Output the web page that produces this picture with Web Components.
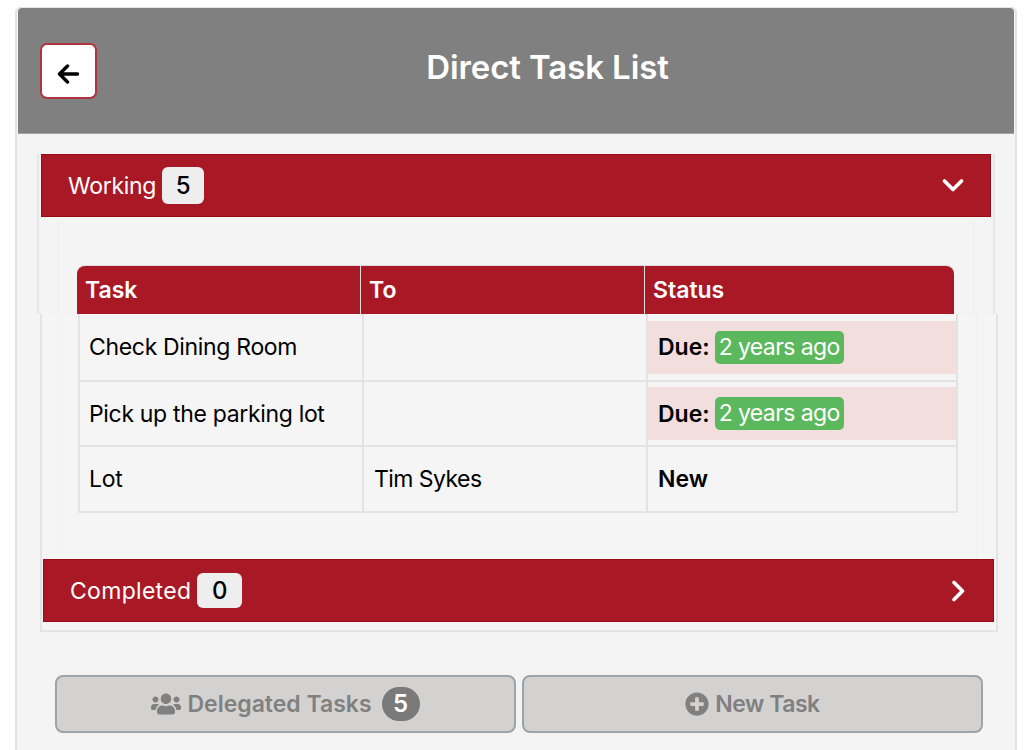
<!DOCTYPE html>
<html lang="en">
<head>
<meta charset="utf-8">
<title>Direct Task List</title>
<style>
    html, body { margin: 0; height: 750px; overflow: hidden; background: #fff; }
    body { font-family: "Inter", "Liberation Sans", sans-serif; color: #000; }
</style>
</head>
<body>

<task-screen>
    <task-topbar heading="Direct Task List"></task-topbar>

    <task-panel-top>
        <section-head label="Working" count="5" open style="--track: -0.3px"></section-head>
        <table-head></table-head>
    </task-panel-top>

    <task-panel-bottom>
        <task-row task="Check Dining Room"><status-due></status-due></task-row>
        <task-row task="Pick up the parking lot"><status-due></status-due></task-row>
        <task-row task="Lot" to="Tim Sykes"><b>New</b></task-row>
        <section-head slot="after" label="Completed" count="0" style="--track: 0.3px; --badge-h: 35px; --badge-w: 45px"></section-head>
    </task-panel-bottom>

    <action-bar>
        <action-button label="Delegated Tasks" count="5" icon="users"></action-button>
        <action-button label="New Task" icon="plus" style="--track: -0.5px"></action-button>
    </action-bar>
</task-screen>

<script>
// SHARED ICON MARKUP
const ICONS = {
    users: `<svg width="30" height="24" viewBox="0 0 640 512" fill="currentColor"><path d="M96 224c35.3 0 64-28.7 64-64s-28.7-64-64-64-64 28.7-64 64 28.7 64 64 64zm448 0c35.3 0 64-28.7 64-64s-28.7-64-64-64-64 28.7-64 64 28.7 64 64 64zm32 32h-64c-17.6 0-33.5 7.1-45.1 18.6 40.3 22.1 68.9 62 75.1 109.4h66c17.7 0 32-14.3 32-32v-32c0-35.3-28.7-64-64-64zm-256 0c61.9 0 112-50.1 112-112S381.9 32 320 32 208 82.1 208 144s50.1 112 112 112zm76.8 32h-8.3c-20.8 10-43.9 16-68.5 16s-47.6-6-68.5-16h-8.3C179.6 288 128 339.6 128 403.2V432c0 26.5 21.5 48 48 48h288c26.5 0 48-21.5 48-48v-28.8c0-63.6-51.6-115.2-115.2-115.2zm-223.7-13.4C161.5 263.1 145.6 256 128 256H64c-35.3 0-64 28.7-64 64v32c0 17.7 14.3 32 32 32h65.9c6.3-47.4 34.9-87.3 75.2-109.4z"/></svg>`,
    plus: `<svg width="24" height="24" viewBox="0 0 512 512" fill="currentColor"><path d="M256 8C119 8 8 119 8 256s111 248 248 248 248-111 248-248S393 8 256 8zm144 276c0 6.6-5.4 12-12 12h-92v92c0 6.6-5.4 12-12 12h-56c-6.6 0-12-5.4-12-12v-92h-92c-6.6 0-12-5.4-12-12v-56c0-6.6 5.4-12 12-12h92v-92c0-6.6 5.4-12 12-12h56c6.6 0 12 5.4 12 12v92h92c6.6 0 12 5.4 12 12v56z"/></svg>`,
    down: `<svg width="22" height="15" viewBox="0 0 22 15" fill="none" stroke="#fff" stroke-width="3.6" stroke-linecap="round" stroke-linejoin="round"><path d="M2.5 3l8.5 8.5L19.5 3"/></svg>`,
    right: `<svg width="15" height="22" viewBox="0 0 15 22" fill="none" stroke="#fff" stroke-width="3.6" stroke-linecap="round" stroke-linejoin="round"><path d="M3 2.5l8.5 8.5L3 19.5"/></svg>`
};

// OUTER CARD
class TaskScreen extends HTMLElement {
    constructor() {
        super();
        this.attachShadow({ mode: 'open' });
        this.shadowRoot.innerHTML = `
            <style>
                :host {
                    display: block;
                    box-sizing: border-box;
                    width: 1002px;
                    height: 743px;
                    margin: 7px 0 0 15px;
                    background: #f4f4f4;
                    border: 2px solid #e2e2e2;
                    border-width: 1px 2px 0;
                    border-radius: 5px 5px 0 0;
                }
            </style>
            <slot></slot>
        `;
    }
}

// GREY TITLE BAR WITH BACK BUTTON
class TaskTopbar extends HTMLElement {
    constructor() {
        super();
        this.attachShadow({ mode: 'open' });
        this.shadowRoot.innerHTML = `
            <style>
                :host {
                    display: flex;
                    align-items: center;
                    box-sizing: border-box;
                    height: 126px;
                    margin: 0 1px;
                    padding: 0 16px 0 22px;
                    background: #808080;
                    border-bottom: 1px solid #a3a3a3;
                    border-radius: 4px 4px 0 0;
                }
                button {
                    box-sizing: border-box;
                    width: 57px;
                    height: 56px;
                    padding: 6px 2px 0 0;
                    display: flex;
                    align-items: center;
                    justify-content: center;
                    background: #fff;
                    border: 2px solid #b0343e;
                    border-radius: 7px;
                }
                h1 {
                    flex: 1;
                    margin: 0 0 7px;
                    text-align: center;
                    color: #fff;
                    font-size: 33px;
                    font-weight: 600;
                    letter-spacing: -0.1px;
                }
            </style>
            <button aria-label="Back">
                <svg width="22" height="20" viewBox="0 0 22 20" fill="none" stroke="#000" stroke-width="3.4" stroke-linecap="round" stroke-linejoin="round"><path d="M10.5 2L2.5 10l8 8M3 10h17.5"/></svg>
            </button>
            <h1></h1>
        `;
        this.shadowRoot.querySelector('h1').textContent = this.getAttribute('heading');
    }
}

// RED ACCORDION HEADER
class SectionHead extends HTMLElement {
    constructor() {
        super();
        this.attachShadow({ mode: 'open' });
        this.shadowRoot.innerHTML = `
            <style>
                :host {
                    display: flex;
                    align-items: center;
                    box-sizing: border-box;
                    height: 63px;
                    padding: 0 27px 0 26px;
                    background: #a91825;
                    border: 1px solid #9a0a16;
                    color: #fff;
                    font-size: 23px;
                }
                .label { padding-top: 1px; letter-spacing: var(--track, 0); }
                .count {
                    box-sizing: border-box;
                    width: var(--badge-w, 42px);
                    height: var(--badge-h, 37px);
                    margin-left: 6px;
                    line-height: var(--badge-h, 37px);
                    text-align: center;
                    background: #eee;
                    border-radius: 6px;
                    color: #000;
                    font-size: 24px;
                    font-weight: 500;
                }
                .icon { margin-left: auto; display: flex; }
            </style>
            <span class="label"></span><span class="count"></span><span class="icon"></span>
        `;
        this.shadowRoot.querySelector('.label').textContent = this.getAttribute('label');
        this.shadowRoot.querySelector('.count').textContent = this.getAttribute('count');
        const icon = this.shadowRoot.querySelector('.icon');
        icon.innerHTML = this.hasAttribute('open') ? ICONS.down : ICONS.right;
        icon.style.marginRight = this.hasAttribute('open') ? '-1px' : '0';
    }
}

// UPPER PART OF THE PANEL: HEADER, THEN TABLE HEAD
class TaskPanelTop extends HTMLElement {
    constructor() {
        super();
        this.attachShadow({ mode: 'open' });
        this.shadowRoot.innerHTML = `
            <style>
                :host {
                    display: block;
                    box-sizing: border-box;
                    width: 958px;
                    margin: 20px 0 0 20px;
                    padding: 0 2px;
                    border: 2px solid #e6e6e6;
                    border-width: 0 2px;
                }
                .body {
                    box-sizing: border-box;
                    width: 916px;
                    margin-left: 17px;
                    padding: 49px 0 0 18px;
                    border: 1px solid #eee;
                    border-width: 0 1px;
                }
            </style>
            <slot name="head"></slot>
            <div class="body"><slot></slot></div>
        `;
        this.querySelector('section-head').slot = 'head';
    }
}

// TABLE HEAD ROW
class TableHead extends HTMLElement {
    constructor() {
        super();
        this.attachShadow({ mode: 'open' });
        this.shadowRoot.innerHTML = `
            <style>
                :host {
                    display: grid;
                    grid-template-columns: 283px 284px 1fr;
                    box-sizing: border-box;
                    width: 877px;
                    height: 48px;
                    background: #a91825;
                    border-radius: 8px 8px 0 0;
                    box-shadow: 0 -1px 0 #ddd;
                    color: #fff;
                    font-size: 23px;
                    font-weight: 600;
                }
                div { padding-left: 8px; line-height: 49px; }
                div + div { border-left: 1.5px solid #ddd; }
            </style>
            <div>Task</div><div>To</div><div>Status</div>
        `;
    }
}

// LOWER PART OF THE PANEL: ROWS, THEN THE COMPLETED HEADER
class TaskPanelBottom extends HTMLElement {
    constructor() {
        super();
        this.attachShadow({ mode: 'open' });
        this.shadowRoot.innerHTML = `
            <style>
                :host {
                    display: block;
                    box-sizing: border-box;
                    width: 958px;
                    margin-left: 23px;
                    padding: 0 2px 8px 1px;
                    background: #f5f5f5;
                    border: 2px solid #e4e4e4;
                    border-top: 0;
                }
                .body {
                    box-sizing: border-box;
                    width: 916px;
                    margin-left: 18px;
                    padding: 0 0 46px 16px;
                    border: 1px solid #f0f0f0;
                    border-width: 0 1px;
                }
                .rows {
                    width: 880px;
                    box-sizing: border-box;
                    border: 2px solid #e3e3e3;
                    border-top: 0;
                }
            </style>
            <div class="body"><div class="rows"><slot></slot></div></div>
            <slot name="after"></slot>
        `;
    }
}

// ONE TABLE ROW, STATUS COMES IN THROUGH THE SLOT
class TaskRow extends HTMLElement {
    constructor() {
        super();
        this.attachShadow({ mode: 'open' });
        this.shadowRoot.innerHTML = `
            <style>
                :host {
                    display: grid;
                    grid-template-columns: 282px 284px 1fr;
                    box-sizing: border-box;
                    height: 65px;
                    font-size: 23px;
                    letter-spacing: -0.33px;
                    border-bottom: 2px solid #e3e3e3;
                }
                :host(:first-of-type) { height: 68px; }
                :host(:last-of-type) { height: 64px; border-bottom: 0; }
                .cell { display: flex; align-items: center; padding-left: 9px; }
                .cell + .cell { border-left: 2px solid #e3e3e3; padding-left: 10px; }
                .to { letter-spacing: -0.55px; }
                .status { padding-left: 0 !important; }
                ::slotted(b) { margin-left: 10px; font-weight: 600; letter-spacing: 0; }
            </style>
            <div class="cell task"></div>
            <div class="cell to"></div>
            <div class="cell status"><slot></slot></div>
        `;
        this.shadowRoot.querySelector('.task').textContent = this.getAttribute('task');
        this.shadowRoot.querySelector('.to').textContent = this.getAttribute('to') || '';
    }
}

// PINK OVERDUE STATUS WITH GREEN BADGE
class StatusDue extends HTMLElement {
    constructor() {
        super();
        this.attachShadow({ mode: 'open' });
        this.shadowRoot.innerHTML = `
            <style>
                :host {
                    display: flex;
                    align-items: center;
                    flex: 1;
                    height: 53px;
                    padding-left: 10px;
                    background: #f3dede;
                    font-size: 23px;
                    letter-spacing: 0;
                }
                b { font-weight: 600; margin-right: 5px; }
                .ago {
                    padding: 0 4px;
                    height: 33px;
                    line-height: 33px;
                    background: #5cb85c;
                    border-radius: 5px;
                    color: #fff;
                    letter-spacing: -0.6px;
                }
            </style>
            <b>Due:</b><span class="ago">2 years ago</span>
        `;
    }
}

// BOTTOM BUTTON ROW
class ActionBar extends HTMLElement {
    constructor() {
        super();
        this.attachShadow({ mode: 'open' });
        this.shadowRoot.innerHTML = `
            <style>
                :host {
                    display: grid;
                    grid-template-columns: 461px 461px;
                    gap: 6px;
                    margin: 43px 0 0 38px;
                }
            </style>
            <slot></slot>
        `;
    }
}

class ActionButton extends HTMLElement {
    constructor() {
        super();
        this.attachShadow({ mode: 'open' });
        const count = this.getAttribute('count');
        this.shadowRoot.innerHTML = `
            <style>
                :host {
                    display: flex;
                    align-items: center;
                    justify-content: center;
                    box-sizing: border-box;
                    height: 58px;
                    background: #d3d2d1;
                    border: 2px solid #9ca3ab;
                    border-radius: 8px;
                    color: #808080;
                    font-size: 23px;
                    font-weight: 600;
                }
                .icon { display: flex; margin-right: 6px; }
                .label { letter-spacing: var(--track, 0); }
                .count {
                    width: 38px;
                    height: 34px;
                    margin-left: 10px;
                    line-height: 34px;
                    text-align: center;
                    background: #7a7a7a;
                    border-radius: 17px;
                    color: #fff;
                    font-size: 24px;
                }
            </style>
            <span class="icon">${ICONS[this.getAttribute('icon')]}</span>
            <span class="label"></span>
            ${count ? `<span class="count">${count}</span>` : ''}
        `;
        this.shadowRoot.querySelector('.label').textContent = this.getAttribute('label');
    }
}

// REGISTER CUSTOM ELEMENTS
customElements.define('status-due', StatusDue);
customElements.define('task-row', TaskRow);
customElements.define('table-head', TableHead);
customElements.define('section-head', SectionHead);
customElements.define('task-panel-top', TaskPanelTop);
customElements.define('task-panel-bottom', TaskPanelBottom);
customElements.define('task-topbar', TaskTopbar);
customElements.define('action-button', ActionButton);
customElements.define('action-bar', ActionBar);
customElements.define('task-screen', TaskScreen);
</script>
</body>
</html>
